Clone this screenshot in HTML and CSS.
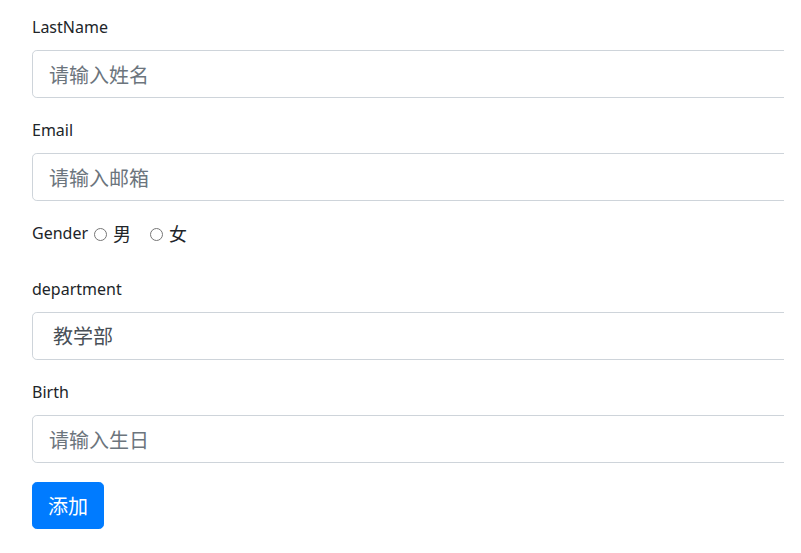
FILE: index.html
```html
<!DOCTYPE html>
<html lang="zh">
<head>
<meta charset="utf-8">
<title>添加员工</title>
<link rel="stylesheet" href="styles.css">
</head>
<body>
<div class="viewport">
  <form class="form">
    <div class="form-group">
      <label class="label">LastName</label>
      <input class="form-control" type="text" placeholder="请输入姓名">
    </div>
    <div class="form-group">
      <label class="label">Email</label>
      <input class="form-control" type="email" placeholder="请输入邮箱">
    </div>
    <div class="form-group gender">
      <label class="label">Gender</label><span class="radio"></span><span class="opt">男</span><span class="radio second"></span><span class="opt">女</span>
    </div>
    <div class="form-group">
      <label class="label">department</label>
      <div class="form-control select">教学部</div>
    </div>
    <div class="form-group">
      <label class="label">Birth</label>
      <input class="form-control" type="text" placeholder="请输入生日">
    </div>
    <button class="btn" type="button">添加</button>
  </form>
</div>
</body>
</html>
```

FILE: styles.css
```css
html, body {
  margin: 0;
  padding: 0;
  background: #fff;
}
body {
  font-family: "Noto Sans", "Noto Sans CJK SC", sans-serif;
  color: #212529;
  font-size: 16px;
}
.viewport {
  width: 784px;
  height: 553px;
  overflow: hidden;
}
.form {
  padding: 14px 0 0 32px;
  width: 800px;
}
.form-group {
  margin-bottom: 19px;
}
.label {
  display: inline-block;
  font-size: 16px;
  line-height: 26px;
  margin-bottom: 10px;
}
.form-control {
  display: block;
  box-sizing: border-box;
  width: 100%;
  height: 48px;
  padding: 8px 16px;
  font-family: "Noto Sans CJK SC", "Noto Sans", sans-serif;
  font-size: 20px;
  line-height: 30px;
  color: #495057;
  background: #fff;
  border: 1px solid #ced4da;
  border-radius: 4.8px;
  outline: none;
}
.form-control::placeholder {
  color: #6c757d;
  opacity: 1;
}
.select {
  padding-left: 20px;
  color: #495057;
}
.gender {
  display: flex;
  align-items: flex-start;
  margin-bottom: 20px;
}
.radio {
  display: inline-block;
  box-sizing: border-box;
  width: 13px;
  height: 13px;
  border: 1px solid #767676;
  border-radius: 50%;
  margin: 8px 6px 0 6px;
}
.radio.second {
  margin-left: 19px;
}
.opt {
  font-family: "Noto Sans CJK SC", sans-serif;
  font-size: 18px;
  line-height: 26px;
}
.btn {
  display: block;
  box-sizing: border-box;
  height: 47px;
  padding: 8px 15px;
  font-family: "Noto Sans CJK SC", sans-serif;
  font-size: 20px;
  line-height: 29px;
  color: #fff;
  background: #007bff;
  border: 1px solid #007bff;
  border-radius: 4.8px;
}
```
